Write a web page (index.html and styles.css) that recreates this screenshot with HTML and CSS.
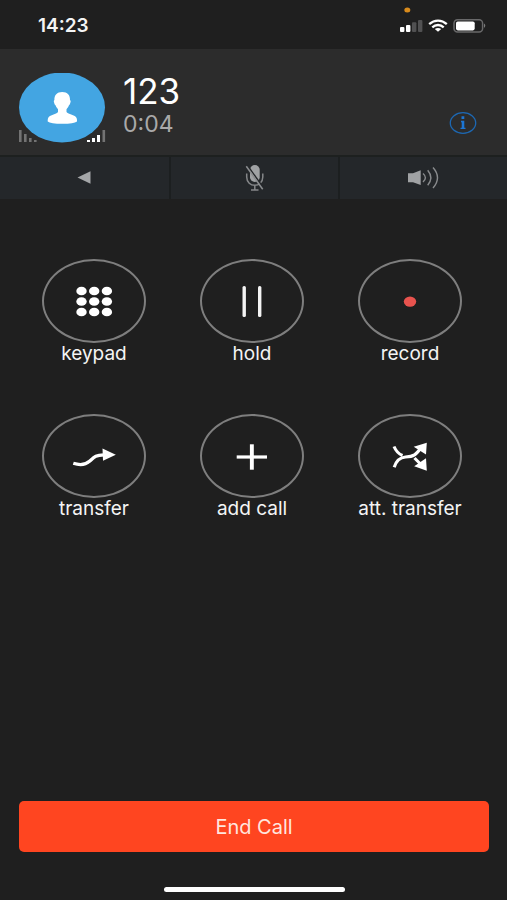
FILE: index.html
```html
<!DOCTYPE html>
<html lang="en">
<head>
<meta charset="utf-8">
<meta name="viewport" content="width=device-width, initial-scale=1">
<title>Call</title>
<link rel="stylesheet" href="styles.css">
</head>
<body>
<div class="phone">
  <div class="status">
    <time class="clock">14:23</time>
    <svg class="status-icons" width="90" height="49" viewBox="0 0 90 49" aria-hidden="true">
      <ellipse cx="9.3" cy="10" rx="3" ry="2.5" fill="#d98b1c"/>
      <g fill="#fff"><rect x="2" y="27" width="4.4" height="5" rx="1"/><rect x="8" y="25" width="4.4" height="7" rx="1"/></g>
      <g fill="#515152"><rect x="14" y="22.3" width="4.4" height="9.7" rx="1"/><rect x="20" y="20" width="4.4" height="12" rx="1"/></g>
      <g fill="none" stroke="#fff" stroke-width="2.3">
        <path d="M31.2 24.2C36.5 19.3 43.5 19.3 48.8 24.2"/>
        <path d="M34.3 27.3C37.6 24.2 42.4 24.2 45.7 27.3"/>
      </g>
      <path d="M36.8 29.1Q40 26.8 43.2 29.1L40 31.8Z" fill="#fff"/>
      <rect x="56" y="19.7" width="28.6" height="12.3" rx="3.5" fill="none" stroke="#69696a" stroke-width="1.5"/>
      <rect x="58" y="21.4" width="18.7" height="9" rx="1.8" fill="#fff"/>
      <path d="M86 23.5Q88.6 25.7 86 28Z" fill="#7a7a7a"/>
    </svg>
  </div>

  <header class="caller">
    <svg class="avatar" width="88" height="72" viewBox="0 0 88 72" role="img" aria-label="Contact">
      <g fill="#737373"><rect x="0" y="57" width="2.6" height="12"/><rect x="5" y="61" width="2.6" height="8"/><rect x="10" y="65" width="2.6" height="4"/><rect x="15" y="67" width="2.6" height="2"/><rect x="83.5" y="57" width="2.6" height="12"/></g>
      <ellipse cx="43" cy="34.5" rx="43" ry="35" fill="#43a5e2"/>
      <g fill="#fff"><rect x="68" y="67" width="3" height="2"/><rect x="73" y="65" width="3" height="4"/><rect x="78" y="62" width="3" height="7"/></g>
      <path transform="translate(0 -1)" d="M43.2 20C48.5 20 51.2 23 51 28Q52.3 28.5 51.3 31Q50.8 33 50 33.3Q49.3 35.5 47.5 37.3V40Q48.5 41.5 54 43.2Q58 44.5 58 48V49.5Q55 51.8 43.3 51.8T28.7 49.5V48Q28.7 44.5 32.7 43.2Q38.2 41.5 39 40V37.3Q37.2 35.5 36.5 33.3Q35.6 33 35.2 31Q34.2 28.5 35.4 28C35.2 23 38 20 43.2 20Z" fill="#fff"/>
    </svg>
    <div class="who">
      <h1 class="number">123</h1>
      <p class="timer">0:04</p>
    </div>
    <button class="info" aria-label="Info">
      <svg width="28" height="24" viewBox="0 0 28 24" aria-hidden="true">
        <ellipse cx="14" cy="12" rx="12.7" ry="10.3" fill="none" stroke="#1d68b3" stroke-width="1.3"/>
        <path d="M12.500 5.300H15.300V8H12.500ZM12 9.800H15.300V16.700H16.500V18H11.500V16.700H12.700V11.200H12Z" fill="#1c76d4"/>
      </svg>
    </button>
  </header>

  <div class="toolbar">
    <button class="tool" aria-label="Back">
      <svg width="16" height="28" viewBox="0 0 16 28" aria-hidden="true"><path d="M0.5 13.5L13.5 7.3V19.7Z" fill="#a4a6a8"/></svg>
    </button>
    <button class="tool" aria-label="Mute">
      <svg width="24" height="28" viewBox="0 0 24 28" aria-hidden="true">
        <rect x="7" y="1" width="9.7" height="17" rx="4.85" fill="#a0a2a4"/>
        <path d="M3.7 9.5V13C3.7 24 19.8 24 19.8 13V9.5M11.8 21.5V25.8M8 26H15.500" fill="none" stroke="#858789" stroke-width="1.5"/>
        <path d="M4.5 1.5L20.8 24.5" stroke="#24272a" stroke-width="1.5"/>
        <path d="M3.3 2.3L19.7 25.3" stroke="#8c8e90" stroke-width="1.5"/>
      </svg>
    </button>
    <button class="tool" aria-label="Speaker">
      <svg width="34" height="28" viewBox="0 0 34 28" aria-hidden="true">
        <path d="M1 9.300H6L13.700 6.300V21L6 18.300H1Z" fill="#a0a2a4"/>
        <g fill="none" stroke="#898b8d" stroke-width="1.4"><path d="M16 9.500Q20.800 13.700 16 18"/><path d="M20.700 6.200Q27 13.700 20.700 21.200"/><path d="M26 3.500Q35 13.700 26 24"/></g>
      </svg>
    </button>
  </div>

  <main class="actions">
    <button class="action">
      <span class="ring"><svg width="50" height="36" viewBox="0 0 50 36" fill="#fff" aria-hidden="true">
        <ellipse cx="12.5" cy="8" rx="5.2" ry="4.3"/><ellipse cx="25.2" cy="8" rx="5.2" ry="4.3"/><ellipse cx="37.9" cy="8" rx="5.2" ry="4.3"/>
        <ellipse cx="12.5" cy="18.5" rx="5.2" ry="4.3"/><ellipse cx="25.2" cy="18.5" rx="5.2" ry="4.3"/><ellipse cx="37.9" cy="18.5" rx="5.2" ry="4.3"/>
        <ellipse cx="12.5" cy="29" rx="5.2" ry="4.3"/><ellipse cx="25.2" cy="29" rx="5.2" ry="4.3"/><ellipse cx="37.9" cy="29" rx="5.2" ry="4.3"/>
      </svg></span>
      <span class="label">keypad</span>
    </button>
    <button class="action">
      <span class="ring"><svg width="50" height="36" viewBox="0 0 50 36" fill="#f4f4f4" aria-hidden="true">
        <rect x="15.5" y="3" width="3.4" height="31" rx="1.5"/><rect x="31" y="3" width="3.4" height="31" rx="1.5"/>
      </svg></span>
      <span class="label">hold</span>
    </button>
    <button class="action">
      <span class="ring"><svg width="50" height="36" viewBox="0 0 50 36" aria-hidden="true">
        <ellipse cx="25" cy="18.6" rx="6.2" ry="5.2" fill="#e8534e"/>
      </svg></span>
      <span class="label">record</span>
    </button>
    <button class="action">
      <span class="ring"><svg width="50" height="36" viewBox="0 0 50 36" aria-hidden="true">
        <path d="M4.3 25.3C10 27.1 16 27.3 20.5 23.3C25 19.3 26 17.3 35 16.800" fill="none" stroke="#fff" stroke-width="3.3"/>
        <path d="M33.5 10.6L46.8 16.7L34 22.8Z" fill="#fff"/>
      </svg></span>
      <span class="label">transfer</span>
    </button>
    <button class="action">
      <span class="ring"><svg width="50" height="36" viewBox="0 0 50 36" fill="#fff" aria-hidden="true">
        <rect x="9.7" y="17.4" width="30.3" height="3.2"/><rect x="22.9" y="6.3" width="3.9" height="25.4"/>
      </svg></span>
      <span class="label">add call</span>
    </button>
    <button class="action">
      <span class="ring"><svg width="50" height="36" viewBox="0 0 50 36" aria-hidden="true">
        <g fill="none" stroke="#fff" stroke-width="3.1"><path d="M9 8.5C10.5 12 12.5 15.5 17.5 17.5"/><path d="M9.2 29.2C11 23.5 14.5 19.5 20.5 19C29 18.6 31 16.5 35.5 10.5"/><path d="M29.5 20L36 26.5"/></g>
        <path d="M41.8 4.7L28.7 8.7L41 16.5ZM41.8 32.8L41 20.3L29.2 28.3Z" fill="#fff"/>
      </svg></span>
      <span class="label">att. transfer</span>
    </button>
  </main>

  <footer class="bottom">
    <button class="end">End Call</button>
    <div class="home"></div>
  </footer>
</div>
</body>
</html>
```
FILE: styles.css
```css
* { box-sizing: border-box; }

body {
  margin: 0;
  background: #1f1f1f;
  color: #f4f4f4;
  font-family: Inter, "Liberation Sans", sans-serif;
}

button {
  margin: 0;
  padding: 0;
  border: 0;
  background: none;
  color: inherit;
  font: inherit;
  cursor: pointer;
}

svg { display: block; }

.phone {
  display: flex;
  flex-direction: column;
  min-height: 100vh;
}

.status {
  display: flex;
  justify-content: space-between;
  align-items: flex-start;
  padding: 0 19px 0 38px;
}

.clock {
  padding-top: 14px;
  font-size: 19px;
  line-height: 24px;
  font-weight: 600;
}

.caller {
  display: flex;
  align-items: flex-start;
  padding: 24px 30px 10px 19px;
  background: #2c2c2c;
}

.who {
  flex: 1;
  padding-left: 16px;
}

.number {
  margin: 0;
  font-size: 35px;
  line-height: 36px;
  font-weight: 400;
  color: #fff;
}

.timer {
  margin: 0;
  font-size: 23px;
  line-height: 30px;
  color: #a9a9a9;
}

.info { padding-top: 38px; }

.toolbar {
  display: grid;
  grid-template-columns: repeat(3, 1fr);
  border-top: 2px solid #1d201f;
  background: #24272a;
}

.tool {
  display: flex;
  justify-content: center;
  align-items: center;
  height: 42px;
}

.tool + .tool { border-left: 2px solid #1c1f20; }

.actions {
  display: grid;
  grid-template-columns: repeat(3, 1fr);
  row-gap: 49px;
  padding: 60px 18px 48px 15px;
}

.action {
  display: flex;
  flex-direction: column;
  align-items: center;
}

.ring {
  display: flex;
  justify-content: center;
  align-items: center;
  width: 104px;
  height: 84px;
  border: 2px solid #7e7e7e;
  border-radius: 50%;
}

.label {
  font-size: 19px;
  line-height: 22px;
}

.bottom {
  margin-top: auto;
  padding: 0 18px 8px 19px;
}

.end {
  display: block;
  width: 100%;
  height: 51px;
  border-radius: 5px;
  background: #ff4520;
  color: #ffe6df;
  font-size: 20px;
}

.home {
  width: 181px;
  height: 5px;
  margin: 35px auto 0;
  border-radius: 3px;
  background: #fff;
}
```
